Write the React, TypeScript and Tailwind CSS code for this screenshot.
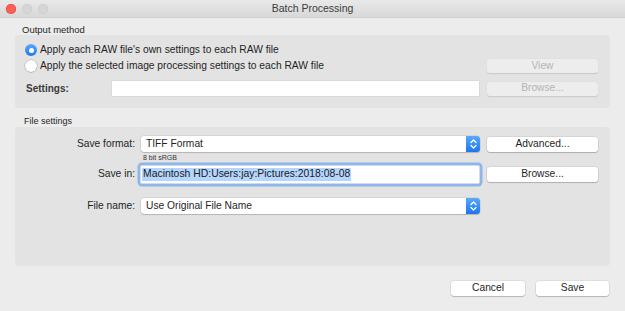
import React from "react";

const font = { fontFamily: '"Liberation Sans", Arial, sans-serif' };

function Button({ label, disabled, className = "" }: { label: string; disabled?: boolean; className?: string }) {
  return (
    <div
      className={`flex items-center justify-center rounded-[3px] text-[10.25px] leading-none ${
        disabled
          ? "bg-[#ededed] text-[#b4b4b4] shadow-[0_0.5px_1px_rgba(0,0,0,0.12)]"
          : "bg-white text-[#1f1f1f] shadow-[0_0_0_0.5px_rgba(0,0,0,0.12),0_1px_1px_rgba(0,0,0,0.18)]"
      } ${className}`}
    >
      {label}
    </div>
  );
}

function Stepper() {
  return (
    <div className="flex h-full w-[14px] items-center justify-center rounded-r-[3px] bg-gradient-to-b from-[#58a8fb] to-[#1b76ee]">
      <svg width="7" height="10" viewBox="0 0 7 10" fill="none" stroke="white" strokeWidth="1.3" strokeLinecap="round" strokeLinejoin="round">
        <path d="M1 3.5 L3.5 1 L6 3.5" />
        <path d="M1 6.5 L3.5 9 L6 6.5" />
      </svg>
    </div>
  );
}

function Select({ value }: { value: string }) {
  return (
    <div className="flex h-[16px] w-[339px] items-center justify-between rounded-[3px] bg-white shadow-[0_0_0_0.5px_rgba(0,0,0,0.12),0_1px_1px_rgba(0,0,0,0.15)]">
      <span className="pl-[5px] text-[10.25px] leading-none text-[#1f1f1f]">{value}</span>
      <Stepper />
    </div>
  );
}

function Radio({ checked, label }: { checked?: boolean; label: string }) {
  return (
    <div className="flex items-center gap-[3px]">
      {checked ? (
        <div className="flex h-[12px] w-[12px] items-center justify-center rounded-full bg-gradient-to-b from-[#5aa8fb] to-[#1d78ef]">
          <div className="h-[5px] w-[5px] rounded-full bg-white" />
        </div>
      ) : (
        <div className="h-[12px] w-[12px] rounded-full bg-white shadow-[0_0_0_0.5px_rgba(0,0,0,0.2),0_0.5px_1px_rgba(0,0,0,0.2)]" />
      )}
      <span className="text-[10.25px] leading-none text-[#1f1f1f]">{label}</span>
    </div>
  );
}

export default function App() {
  return (
    <div style={font} className="flex h-[311px] w-[625px] flex-col overflow-hidden bg-[#ececec]">
      <div className="relative flex h-[18px] items-center justify-center border-b border-[#cfcfcf] bg-gradient-to-b from-[#e9e9e9] to-[#d8d8d8]">
        <div className="absolute left-[6px] top-[4px] flex gap-[6px]">
          <div className="h-[10px] w-[10px] rounded-full bg-[#fc5f57] shadow-[inset_0_0_0_0.5px_#e0443e]" />
          <div className="h-[10px] w-[10px] rounded-full bg-[#d6d6d6] shadow-[inset_0_0_0_0.5px_#c8c8c8]" />
          <div className="h-[10px] w-[10px] rounded-full bg-[#d6d6d6] shadow-[inset_0_0_0_0.5px_#c8c8c8]" />
        </div>
        <span className="text-[10.5px] leading-none text-[#3c3c3c]">Batch Processing</span>
      </div>

      <div className="flex flex-col px-[15px]">
        <div className="flex h-[17px] items-end pb-[1px] pl-[7px] text-[9.5px] leading-none text-[#262626]">
          Output method
        </div>
        <div className="flex h-[73px] flex-col rounded-[4px] bg-[#e3e3e3] pl-[10px] pr-[12px] pt-[7px]">
          <div className="flex h-[16px] items-center">
            <Radio checked label="Apply each RAW file's own settings to each RAW file" />
          </div>
          <div className="flex h-[16px] items-center justify-between">
            <Radio label="Apply the selected image processing settings to each RAW file" />
            <Button label="View" disabled className="h-[14px] w-[111px]" />
          </div>
          <div className="mt-[7px] flex h-[15px] items-center">
            <span className="w-[87px] pl-[1px] text-[10px] font-bold leading-none text-[#3a3a3a]">Settings:</span>
            <div className="h-[15px] w-[367px] bg-white shadow-[0_0_0_0.5px_rgba(0,0,0,0.08)]" />
            <Button label="Browse..." disabled className="ml-[8px] h-[14px] w-[111px]" />
          </div>
        </div>

        <div className="flex h-[19px] items-end pb-[1px] pl-[9px] text-[9px] leading-none text-[#262626]">
          File settings
        </div>
        <div className="flex h-[139px] flex-col rounded-[4px] bg-[#e3e3e3] pr-[12px] pt-[9px]">
          <div className="flex h-[16px] items-center">
            <span className="w-[121px] pr-[1px] text-right text-[10.25px] leading-none text-[#1f1f1f]">Save format:</span>
            <div className="ml-[5px]">
              <Select value="TIFF Format" />
            </div>
            <Button label="Advanced..." className="ml-[7px] h-[15px] w-[111px]" />
          </div>
          <div className="ml-[128px] mt-[2px] h-[8px] text-[7px] leading-none text-[#333]">8 bit sRGB</div>
          <div className="mt-[3px] flex h-[19px] items-center">
            <span className="w-[121px] pr-[1px] text-right text-[10.25px] leading-none text-[#1f1f1f]">Save in:</span>
            <div className="ml-[4px] flex h-[19px] w-[340px] items-center rounded-[2px] bg-white shadow-[0_0_0_2.5px_#8db6ea,inset_0_0_0_0.5px_#9bb8dc]">
              <span className="ml-[2px] bg-[#b5d5fd] px-[1px] py-[1.5px] text-[10.4px] leading-none text-[#1a1a1a]">
                Macintosh HD:Users:jay:Pictures:2018:08-08
              </span>
            </div>
            <Button label="Browse..." className="ml-[7px] h-[15px] w-[111px]" />
          </div>
          <div className="mt-[14px] flex h-[16px] items-center">
            <span className="w-[121px] pr-[1px] text-right text-[10.25px] leading-none text-[#1f1f1f]">File name:</span>
            <div className="ml-[5px]">
              <Select value="Use Original File Name" />
            </div>
          </div>
        </div>

        <div className="mt-[15px] flex justify-end gap-[11px] pr-[1px]">
          <Button label="Cancel" className="h-[15px] w-[74px]" />
          <Button label="Save" className="h-[15px] w-[73px]" />
        </div>
      </div>
    </div>
  );
}
